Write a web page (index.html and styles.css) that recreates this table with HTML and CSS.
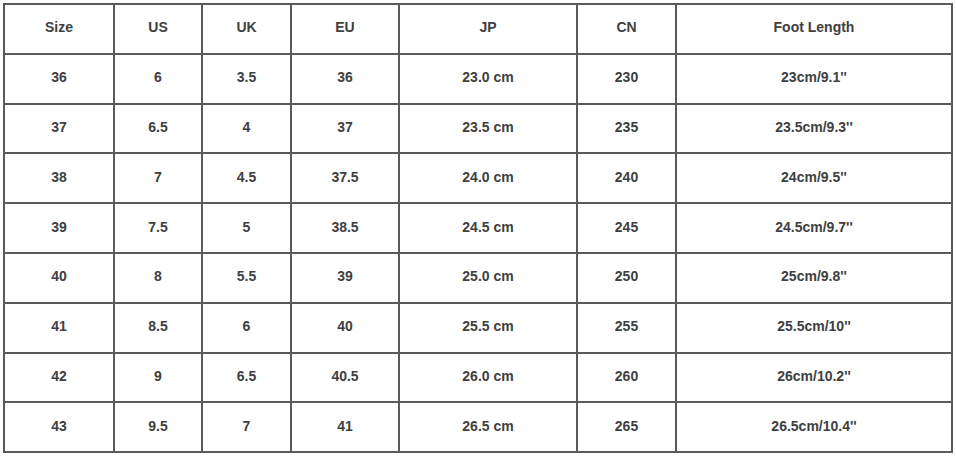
FILE: index.html
```html
<!DOCTYPE html>
<html>
<head>
<meta charset="utf-8">
<link rel="stylesheet" href="styles.css">
</head>
<body>
<table class="chart">
  <colgroup>
    <col class="c1"><col class="c2"><col class="c3"><col class="c4"><col class="c5"><col class="c6"><col class="c7">
  </colgroup>
  <tr><td>Size</td><td>US</td><td>UK</td><td>EU</td><td>JP</td><td>CN</td><td>Foot Length</td></tr>
  <tr><td>36</td><td>6</td><td>3.5</td><td>36</td><td>23.0 cm</td><td>230</td><td>23cm/9.1''</td></tr>
  <tr><td>37</td><td>6.5</td><td>4</td><td>37</td><td>23.5 cm</td><td>235</td><td>23.5cm/9.3''</td></tr>
  <tr><td>38</td><td>7</td><td>4.5</td><td>37.5</td><td>24.0 cm</td><td>240</td><td>24cm/9.5''</td></tr>
  <tr><td>39</td><td>7.5</td><td>5</td><td>38.5</td><td>24.5 cm</td><td>245</td><td>24.5cm/9.7''</td></tr>
  <tr><td>40</td><td>8</td><td>5.5</td><td>39</td><td>25.0 cm</td><td>250</td><td>25cm/9.8''</td></tr>
  <tr><td>41</td><td>8.5</td><td>6</td><td>40</td><td>25.5 cm</td><td>255</td><td>25.5cm/10''</td></tr>
  <tr><td>42</td><td>9</td><td>6.5</td><td>40.5</td><td>26.0 cm</td><td>260</td><td>26cm/10.2''</td></tr>
  <tr><td>43</td><td>9.5</td><td>7</td><td>41</td><td>26.5 cm</td><td>265</td><td>26.5cm/10.4''</td></tr>
</table>
</body>
</html>
```
FILE: styles.css
```css
html, body {
  margin: 0;
  padding: 0;
  background: #ffffff;
}
body {
  padding: 3px 0 0 3px;
}
.chart {
  border-collapse: collapse;
  table-layout: fixed;
  width: 948px;
  font-family: "Liberation Sans", Arial, sans-serif;
  font-size: 14px;
  font-weight: bold;
  color: #404040;
}
.chart td {
  border: 2px solid #5a5a5a;
  height: 44.8px;
  padding: 0 0 3px 0;
  text-align: center;
  vertical-align: middle;
}
.c1 { width: 110px; }
.c2 { width: 88px; }
.c3 { width: 89px; }
.c4 { width: 108px; }
.c5 { width: 178px; }
.c6 { width: 99px; }
.c7 { width: 276px; }
```
